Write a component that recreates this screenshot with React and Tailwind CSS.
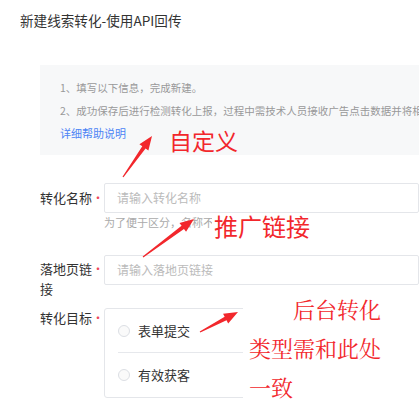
const arrows = [
  { x1: 123, y1: 177, x2: 152, y2: 136 },
  { x1: 143, y1: 257, x2: 194, y2: 219 },
  { x1: 200, y1: 332, x2: 238, y2: 312 },
];

function arrowPoints({ x1, y1, x2, y2 }) {
  const dx = x2 - x1;
  const dy = y2 - y1;
  const len = Math.hypot(dx, dy);
  const ux = dx / len;
  const uy = dy / len;
  const px = -uy;
  const py = ux;
  const headLen = 14;
  const nx = x2 - ux * headLen;
  const ny = y2 - uy * headLen;
  const pts = [
    [x1 + px * 0.6, y1 + py * 0.6],
    [nx + px * 2, ny + py * 2],
    [nx + px * 5.5, ny + py * 5.5],
    [x2, y2],
    [nx - px * 5.5, ny - py * 5.5],
    [nx - px * 2, ny - py * 2],
    [x1 - px * 0.6, y1 - py * 0.6],
  ];
  return pts.map((p) => p.join(",")).join(" ");
}

function Label({ children }) {
  return (
    <div className="flex shrink-0">
      <div className="w-[52px] text-[13px] leading-[20px] text-[#333]">{children}</div>
      <div className="w-[12px] text-center text-[12px] leading-[20px] text-[#f0475a]">•</div>
    </div>
  );
}

function Radio({ text, divider }) {
  return (
    <div className="ml-[13px] flex h-[44px] items-center">
      <div className="flex h-full flex-1 items-center border-[#e6e8ec]" style={{ borderBottomWidth: divider ? 1 : 0 }}>
        <span className="h-[12px] w-[12px] rounded-full border border-[#dcdfe4] bg-[#fafafa]" />
        <span className="ml-[8px] text-[13px] text-[#333]">{text}</span>
      </div>
    </div>
  );
}

export default function App() {
  return (
    <div className="relative h-[407px] w-[419px] overflow-hidden bg-white font-['Noto_Sans_CJK_SC',sans-serif]">
      <h1 className="pl-[20px] pt-[10px] text-[13.6px] leading-[20px] text-[#333]">新建线索转化-使用API回传</h1>

      <div className="ml-[40px] mt-[35px] h-[90px] bg-[#f7f8f9] pl-[20px] pt-[12px] text-[10.5px] leading-[22.5px] whitespace-nowrap">
        <p className="text-[#999]">1、填写以下信息，完成新建。</p>
        <p className="text-[#999]">2、成功保存后进行检测转化上报，过程中需技术人员接收广告点击数据并将相关数据回传至平台。</p>
        <p className="text-[11px] text-[#4c84f5]">详细帮助说明</p>
      </div>

      <div className="pl-[40px]">
        <div className="mt-[28px] flex">
          <div className="pt-[5px]">
            <Label>转化名称</Label>
          </div>
          <div className="flex-1">
            <div className="flex h-[30px] items-center rounded-[2px] border border-[#e4e6ea] pl-[12px] text-[12px] text-[#bbb]">请输入转化名称</div>
            <p className="mt-[1px] text-[11px] leading-[16px] text-[#aaa]">为了便于区分，名称不可重复</p>
          </div>
        </div>

        <div className="mt-[25px] flex">
          <div className="pt-[4px]">
            <Label>落地页链接</Label>
          </div>
          <div className="flex h-[30px] flex-1 items-center rounded-[2px] border border-[#e4e6ea] pl-[12px] text-[12px] text-[#bbb]">请输入落地页链接</div>
        </div>

        <div className="mt-[9px] flex">
          <Label>转化目标</Label>
          <div className="flex-1 rounded-[3px] border border-[#e4e6ea]">
            <Radio text="表单提交" divider />
            <Radio text="有效获客" />
          </div>
        </div>
      </div>

      <div className="absolute left-[169px] top-[129px] text-[23px] leading-none text-[#f2272c]">自定义</div>
      <div className="absolute left-[212px] top-[214px] bg-white pl-[2px] pr-[2px] text-[24px] leading-none text-[#f2272c]">推广链接</div>

      <div className="absolute bottom-0 left-[243px] right-0 top-[289px] bg-white pl-[6px]">
        <p className="w-[134px] indent-[44px] font-['Noto_Serif_CJK_SC','Noto_Sans_CJK_SC',serif] text-[22px] leading-[39px] text-[#f2272c]">后台转化类型需和此处一致</p>
      </div>

      <svg className="pointer-events-none absolute left-0 top-0" width="419" height="407">
        {arrows.map((a, i) => (
          <polygon key={i} points={arrowPoints(a)} fill="#f2272c" />
        ))}
      </svg>
    </div>
  );
}
